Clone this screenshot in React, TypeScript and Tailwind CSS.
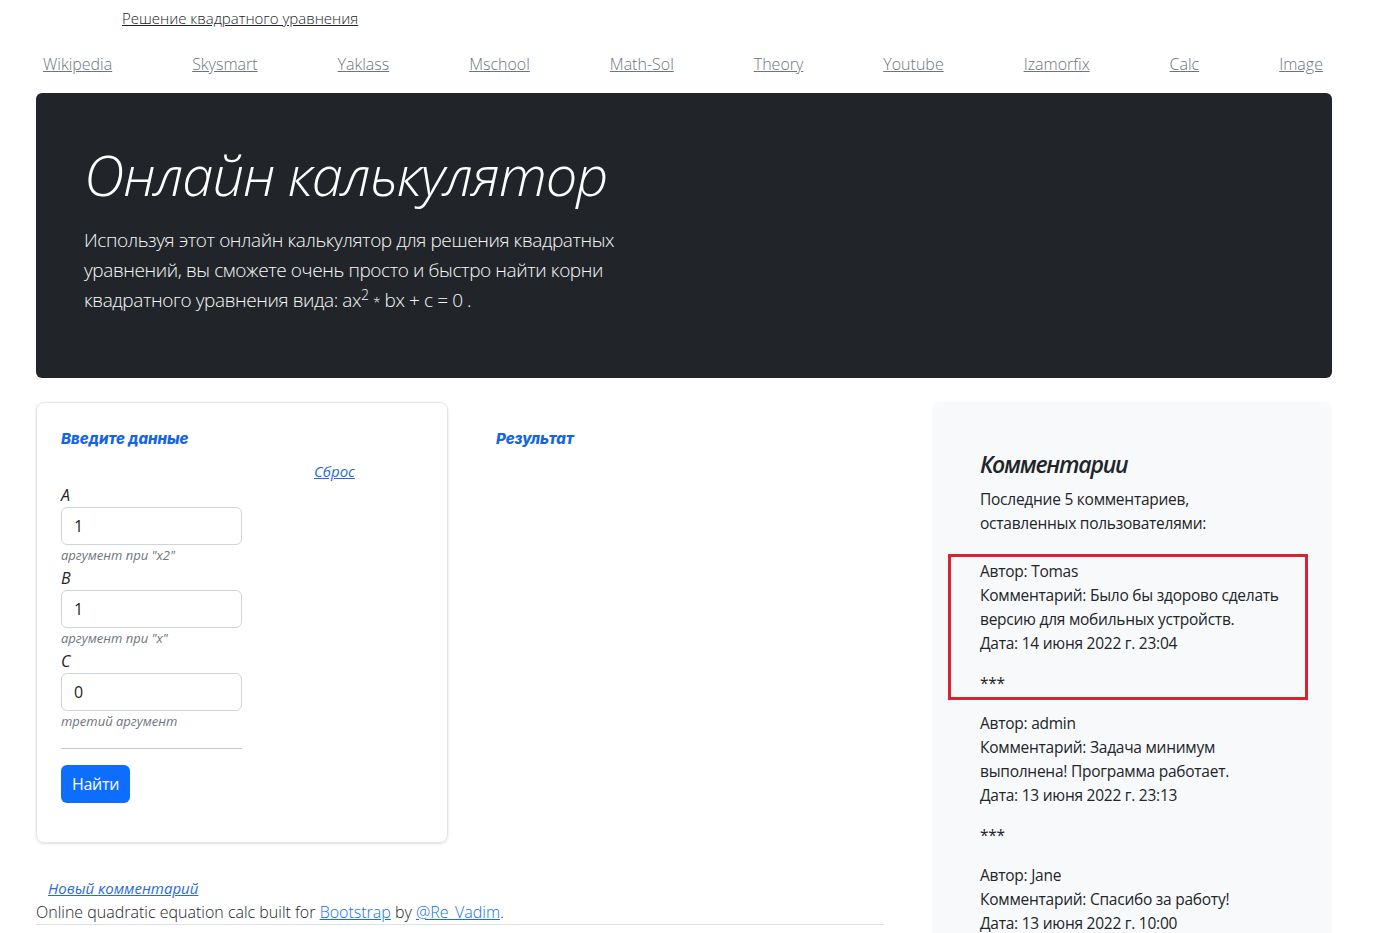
const navLinks = [
  "Wikipedia",
  "Skysmart",
  "Yaklass",
  "Mschool",
  "Math-Sol",
  "Theory",
  "Youtube",
  "Izamorfix",
  "Calc",
  "Image",
];

const comments = [
  {
    author: "Tomas",
    text: "Было бы здорово сделать версию для мобильных устройств.",
    date: "14 июня 2022 г. 23:04",
  },
  {
    author: "admin",
    text: "Задача минимум выполнена! Программа работает.",
    date: "13 июня 2022 г. 23:13",
  },
  {
    author: "Jane",
    text: "Спасибо за работу!",
    date: "13 июня 2022 г. 10:00",
  },
];

const fields = [
  { name: "A", value: "1", hint: 'аргумент при "x2"' },
  { name: "B", value: "1", hint: 'аргумент при "x"' },
  { name: "C", value: "0", hint: "третий аргумент" },
];

function Comment({ author, text, date }: { author: string; text: string; date: string }) {
  return (
    <>
      <p className="mb-4">
        Автор: {author}
        <br />
        Комментарий: {text}
        <br />
        Дата: {date}
      </p>
      <p>***</p>
    </>
  );
}

export default function App() {
  return (
    <div className="min-h-screen bg-white font-['Open_Sans','Noto_Sans',sans-serif] text-[16px] leading-6 text-[#212529]">
      <header className="w-[1296px] pl-[36px] box-content">
        <div className="pt-[6px] pl-[86px]">
          <a href="#" className="text-[15px] font-light text-[#212529] underline">
            Решение квадратного уравнения
          </a>
        </div>
        <nav className="mt-[22px] flex justify-between pl-[7px] pr-[9px]">
          {navLinks.map((l) => (
            <a key={l} href="#" className="font-light text-[#6c757d] underline">
              {l}
            </a>
          ))}
        </nav>
      </header>

      <main className="w-[1296px] pl-[36px] box-content">
        <section className="mt-[17px] h-[285px] rounded-md bg-[#212529] px-12 pt-12">
          <h1 className="mb-[17px] text-[56px] font-light italic leading-[67px] tracking-[-1px] text-white">
            Онлайн калькулятор
          </h1>
          <p className="text-[19px] font-light leading-[30px] tracking-[-0.4px] text-[#f8f9fa]">
            Используя этот онлайн калькулятор для решения квадратных
            <br />
            уравнений, вы сможете очень просто и быстро найти корни
            <br />
            квадратного уравнения вида: ax<sup className="text-[14px] leading-none">2</sup>{" "}
            <span className="text-[13px] leading-none">*</span> bx + c = 0 .
          </p>
        </section>

        <div className="mt-6 flex gap-12">
          <div className="w-[848px]">
            <div className="flex">
              <form className="w-[412px] rounded-lg border border-[#e3e6ea] px-6 pt-6 pb-[39px] shadow-sm">
                <h5 className="font-['Inter',sans-serif] text-[15px] font-extrabold italic leading-6 text-[#1464e6]">
                  Введите данные
                </h5>
                <div className="mt-2 pl-[253px]">
                  <a href="#" className="text-[15px] italic text-[#2a6ad8] underline">
                    Сброс
                  </a>
                </div>
                {fields.map((f) => (
                  <div key={f.name}>
                    <label className="block italic leading-6">{f.name}</label>
                    <input
                      defaultValue={f.value}
                      className="block h-[38px] w-[181px] rounded-md border border-[#ced4da] bg-white px-3 text-[16px] text-[#212529] outline-none"
                    />
                    <div className="text-[13px] italic leading-[21px] text-[#6c757d]">{f.hint}</div>
                  </div>
                ))}
                <hr className="mt-4 w-[181px] border-t border-[#c8c8c8]" />
                <button
                  type="button"
                  className="mt-4 h-[38px] rounded-md bg-[#0d6efd] px-[11px] text-[16px] tracking-[-0.3px] text-white"
                >
                  Найти
                </button>
              </form>
              <div className="pl-[48px] pt-[25px]">
                <h5 className="font-['Inter',sans-serif] text-[15px] font-extrabold italic leading-6 text-[#1464e6]">
                  Результат
                </h5>
              </div>
            </div>

            <footer className="mt-[33px] border-b border-[#dee2e6]">
              <div className="pl-3">
                <a href="#" className="text-[15px] italic text-[#2a6ad8] underline">
                  Новый комментарий
                </a>
              </div>
              <p className="font-light">
                Online quadratic equation calc built for{" "}
                <a href="#" className="text-[#0d6efd] underline">
                  Bootstrap
                </a>{" "}
                by{" "}
                <a href="#" className="text-[#0d6efd] underline">
                  @Re_Vadim
                </a>
                .
              </p>
            </footer>
          </div>

          <aside className="w-[400px] rounded-lg bg-[#f8f9fa] px-12 pt-12 pb-12 text-[15.5px] tracking-[-0.25px]">
            <h4 className="mb-2 text-[23px] font-semibold italic leading-[29px] tracking-[-1.2px] text-[#212529]">
              Комментарии
            </h4>
            <p className="mb-[19px]">
              Последние 5 комментариев,
              <br />
              оставленных пользователями:
            </p>
            <div className="-ml-[32px] -mr-[24px] mb-[11px] border-[3px] border-[#d9232e] pl-[29px] pt-[2px] pb-[2px]">
              <Comment {...comments[0]} />
            </div>
            {comments.slice(1).map((c) => (
              <div key={c.author} className="mb-4">
                <Comment {...c} />
              </div>
            ))}
          </aside>
        </div>
      </main>
    </div>
  );
}
